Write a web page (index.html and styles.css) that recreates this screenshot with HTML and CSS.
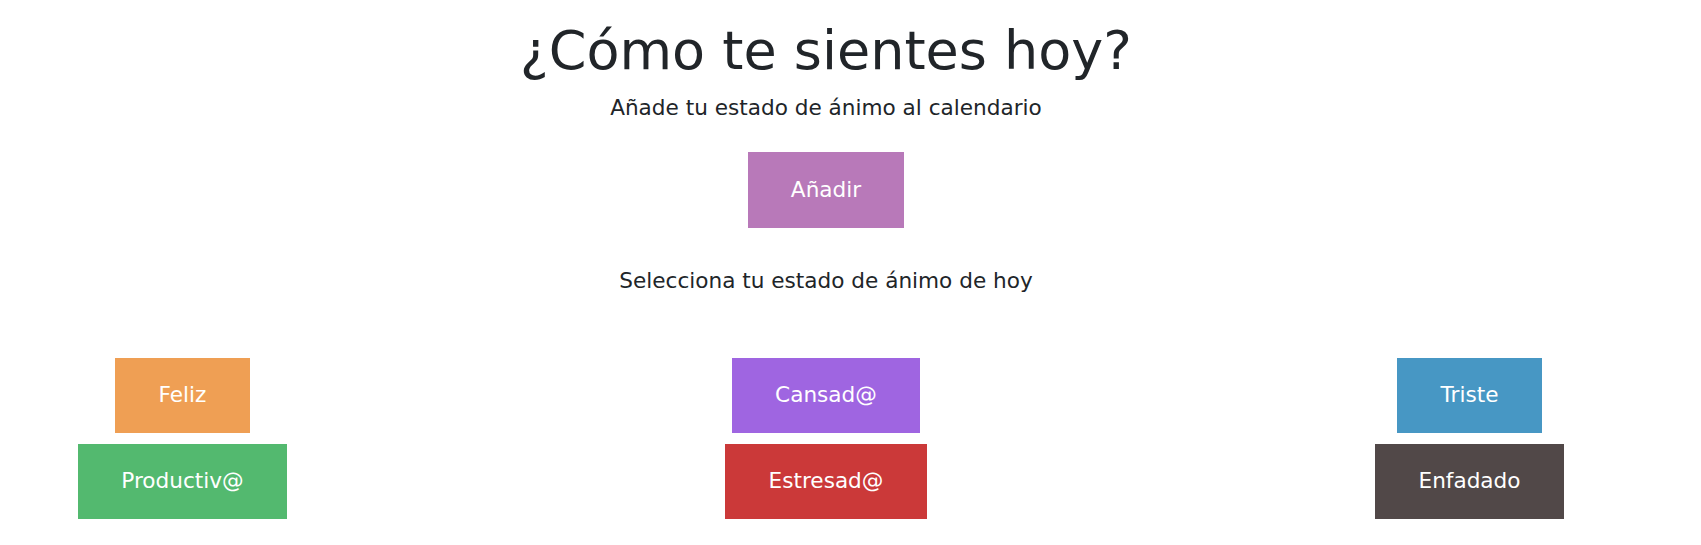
FILE: index.html
```html
<!DOCTYPE html>
<html lang="es">
<head>
<meta charset="utf-8">
<title>¿Cómo te sientes hoy?</title>
<link rel="stylesheet" href="styles.css">
</head>
<body>
<main class="page">
  <h1 class="title">¿Cómo te sientes hoy?</h1>
  <p class="lead">Añade tu estado de ánimo al calendario</p>
  <button class="btn btn-add">Añadir</button>
  <p class="prompt">Selecciona tu estado de ánimo de hoy</p>
  <div class="moods">
    <div class="mood-col">
      <button class="btn mood-feliz">Feliz</button>
      <button class="btn mood-productivo">Productiv@</button>
    </div>
    <div class="mood-col">
      <button class="btn mood-cansado">Cansad@</button>
      <button class="btn mood-estresado">Estresad@</button>
    </div>
    <div class="mood-col">
      <button class="btn mood-triste">Triste</button>
      <button class="btn mood-enfadado">Enfadado</button>
    </div>
  </div>
</main>
</body>
</html>
```

FILE: styles.css
```css
html, body {
  margin: 0;
  padding: 0;
  background: #ffffff;
}

body {
  font-family: "DejaVu Sans", Verdana, sans-serif;
  font-size: 21.6px;
  line-height: 32.4px;
  color: #212529;
}

.page {
  width: 1652px;
  padding-top: 19px;
  display: flex;
  flex-direction: column;
  align-items: center;
  text-align: center;
}

.title {
  margin: 0 0 8.5px;
  font-size: 54px;
  line-height: 64.8px;
  font-weight: normal;
  color: #212529;
}

.lead {
  margin: 0;
}

.btn {
  display: block;
  border: 0;
  border-radius: 0;
  padding: 21.6px 43.2px;
  font-family: "DejaVu Sans", Verdana, sans-serif;
  font-size: 21.6px;
  line-height: 32.4px;
  color: #ffffff;
  cursor: pointer;
}

.btn-add {
  margin-top: 27.3px;
  background: #b879b9;
}

.prompt {
  margin: 37.3px 0 0;
}

.moods {
  margin-top: 60.3px;
  width: 100%;
  display: grid;
  grid-template-columns: repeat(3, 365px);
  column-gap: 278.5px;
}

.mood-col {
  display: flex;
  flex-direction: column;
  align-items: center;
  gap: 10.6px;
}

.mood-feliz { background: #ef9f54; }
.mood-productivo { background: #53b96f; }
.mood-cansado { background: #9f65e1; }
.mood-estresado { background: #cb3939; }
.mood-triste { background: #4797c4; }
.mood-enfadado { background: #514848; }
```
